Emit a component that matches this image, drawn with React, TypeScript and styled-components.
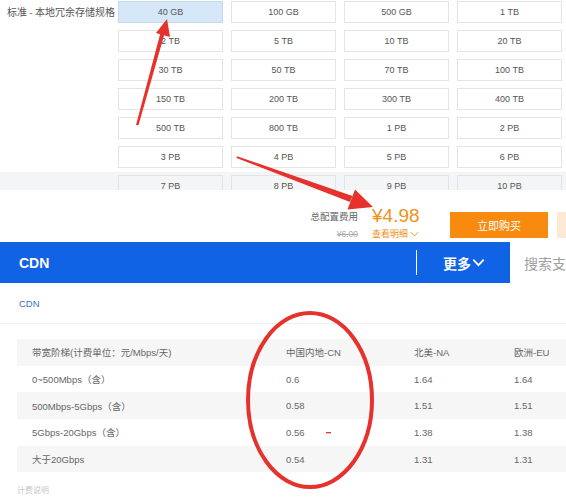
import React from "react";
import styled, { createGlobalStyle } from "styled-components";

const Global = createGlobalStyle`
  html, body { margin: 0; padding: 0; background: #fff; }
  body { overflow: hidden; font-family: "Liberation Sans", Arial, "Noto Sans CJK SC", sans-serif; }
  * { box-sizing: border-box; }
`;

const Page = styled.div`
  position: relative;
  width: 566px;
  height: 500px;
  overflow: hidden;
  background: #fff;
`;

const SpecSection = styled.section`
  display: flex;
  height: 190px;
  overflow: hidden;
  background: linear-gradient(to bottom, #fff 0, #fff 172px, #eef1f5 172px, #f3f5f8 173px);
`;

const SpecLabel = styled.div`
  width: 118px;
  flex-shrink: 0;
  padding-left: 7px;
  padding-top: 1px;
  line-height: 22px;
  font-size: 10px;
  color: #555;
  font-family: "Noto Sans CJK SC", sans-serif;
`;

const SpecGrid = styled.div`
  display: grid;
  grid-template-columns: repeat(4, 105px);
  grid-auto-rows: 22px;
  column-gap: 8px;
  row-gap: 7px;
  padding-top: 1px;
`;

const SpecCell = styled.div<{ $selected?: boolean; $muted?: boolean }>`
  display: flex;
  align-items: center;
  justify-content: center;
  font-size: 9px;
  color: #555;
  border: 1px solid ${(p) => (p.$selected ? "#c2d9ee" : "#e4e4e4")};
  background: ${(p) => (p.$selected ? "#d6e8f7" : p.$muted ? "#f4f5f7" : "#fff")};
`;

const PriceBar = styled.div`
  display: flex;
  align-items: flex-end;
  height: 52px;
  padding-left: 290px;
  padding-bottom: 4px;
  overflow: hidden;
`;

const PriceGroup = styled.div`
  display: grid;
  grid-template-columns: 68px 78px;
  column-gap: 14px;
  align-items: center;
  margin-bottom: -3px;
`;

const PriceLabel = styled.span`
  text-align: right;
  font-size: 9.5px;
  color: #666;
  font-family: "Noto Sans CJK SC", sans-serif;
`;

const PriceValue = styled.span`
  font-size: 19px;
  color: #f39118;
  line-height: 22px;
`;

const OldPrice = styled.span`
  text-align: right;
  font-size: 8.5px;
  color: #aaa;
  text-decoration: line-through;
  line-height: 14px;
`;

const DetailLink = styled.span`
  display: flex;
  align-items: center;
  gap: 2px;
  font-size: 9px;
  color: #f39118;
  line-height: 14px;
  font-family: "Noto Sans CJK SC", sans-serif;
`;

const BuyButton = styled.button<{ $variant?: "primary" | "ghost" }>`
  flex-shrink: 0;
  width: 98px;
  height: 26px;
  margin-left: ${(p) => (p.$variant === "ghost" ? "9px" : "0")};
  border: none;
  padding: 0;
  background: ${(p) => (p.$variant === "ghost" ? "#fde9d6" : "#f78a0f")};
  color: #fff;
  font-size: 11px;
  font-family: "Noto Sans CJK SC", sans-serif;
`;

const NavRow = styled.nav`
  display: flex;
  height: 41px;
`;

const NavBlue = styled.div`
  display: flex;
  align-items: center;
  flex-shrink: 0;
  width: 510px;
  padding-left: 19px;
  padding-right: 25px;
  background: #1163e6;
  color: #fff;
`;

const NavTitle = styled.span`
  font-size: 14px;
  font-weight: bold;
`;

const NavDivider = styled.span`
  width: 1.5px;
  height: 25px;
  margin-left: auto;
  margin-right: 26px;
  background: #fff;
`;

const NavMore = styled.span`
  display: flex;
  align-items: center;
  gap: 1px;
  font-size: 14px;
  font-weight: bold;
  font-family: "Noto Sans CJK SC", sans-serif;
`;

const SearchBox = styled.div`
  display: flex;
  align-items: center;
  flex-shrink: 0;
  padding-left: 14px;
  font-size: 14px;
  color: #a0a0a0;
  white-space: nowrap;
  font-family: "Noto Sans CJK SC", sans-serif;
`;

const Breadcrumb = styled.div`
  height: 41px;
  display: flex;
  align-items: center;
  padding-left: 19px;
  border-bottom: 1px solid #eeeeee;
  font-size: 9.5px;
  color: #3d74ba;
`;

const PriceTable = styled.div`
  margin: 15px 0 0 17px;
  display: grid;
  grid-template-columns: 269px 128px 100px 1fr;
  grid-auto-rows: 26.7px;
`;

const TableCell = styled.div<{ $shade?: boolean; $first?: boolean }>`
  display: flex;
  align-items: center;
  padding-left: ${(p) => (p.$first ? "15px" : "0")};
  background: ${(p) => (p.$shade ? "#f6f6f6" : "#fff")};
  font-size: 9.5px;
  color: #666;
  font-family: "Liberation Sans", Arial, "Noto Sans CJK SC", sans-serif;
`;

const FootNote = styled.div`
  margin: 12px 0 0 17px;
  font-size: 8px;
  color: #c8c8c8;
  font-family: "Noto Sans CJK SC", sans-serif;
`;

const Annotations = styled.svg`
  position: absolute;
  left: 0;
  top: 0;
  pointer-events: none;
`;

const Chevron = ({ size, color, stroke }: { size: number; color: string; stroke: number }) => (
  <svg width={size} height={size * 0.7} viewBox="0 0 10 7">
    <path d="M1 1.2 L5 5.5 L9 1.2" fill="none" stroke={color} strokeWidth={stroke} />
  </svg>
);

const sizes = [
  "40 GB", "100 GB", "500 GB", "1 TB",
  "2 TB", "5 TB", "10 TB", "20 TB",
  "30 TB", "50 TB", "70 TB", "100 TB",
  "150 TB", "200 TB", "300 TB", "400 TB",
  "500 TB", "800 TB", "1 PB", "2 PB",
  "3 PB", "4 PB", "5 PB", "6 PB",
  "7 PB", "8 PB", "9 PB", "10 PB",
];

const tableRows = [
  ["带宽阶梯(计费单位：元/Mbps/天)", "中国内地-CN", "北美-NA", "欧洲-EU"],
  ["0~500Mbps（含）", "0.6", "1.64", "1.64"],
  ["500Mbps-5Gbps（含）", "0.58", "1.51", "1.51"],
  ["5Gbps-20Gbps（含）", "0.56", "1.38", "1.38"],
  ["大于20Gbps", "0.54", "1.31", "1.31"],
];

export default function App() {
  return (
    <Page>
      <Global />
      <SpecSection>
        <SpecLabel>标准 - 本地冗余存储规格</SpecLabel>
        <SpecGrid>
          {sizes.map((s, i) => (
            <SpecCell key={s} $selected={i === 0} $muted={i >= 24}>
              {s}
            </SpecCell>
          ))}
        </SpecGrid>
      </SpecSection>

      <PriceBar>
        <PriceGroup>
          <PriceLabel>总配置费用</PriceLabel>
          <PriceValue>¥4.98</PriceValue>
          <OldPrice>¥6.00</OldPrice>
          <DetailLink>
            查看明细
            <Chevron size={9} color="#f39118" stroke={1} />
          </DetailLink>
        </PriceGroup>
        <BuyButton>立即购买</BuyButton>
        <BuyButton $variant="ghost" />
      </PriceBar>

      <NavRow>
        <NavBlue>
          <NavTitle>CDN</NavTitle>
          <NavDivider />
          <NavMore>
            更多
            <Chevron size={13} color="#fff" stroke={1.4} />
          </NavMore>
        </NavBlue>
        <SearchBox>搜索支持</SearchBox>
      </NavRow>

      <Breadcrumb>CDN</Breadcrumb>

      <PriceTable>
        {tableRows.map((row, r) =>
          row.map((c, ci) => (
            <TableCell key={`${r}-${ci}`} $shade={r % 2 === 0} $first={ci === 0}>
              {c}
            </TableCell>
          ))
        )}
      </PriceTable>

      <FootNote>计费说明</FootNote>

      <Annotations width={566} height={500} viewBox="0 0 566 500">
        <polygon points="136,125 138.5,125.3 164.5,33.8 160.5,32.8" fill="#e5322d" />
        <polygon points="167,19 170,37 156,33" fill="#e5322d" />
        <polygon points="237,156.2 236.5,158 350,202 352.5,196" fill="#e5322d" />
        <polygon points="373,207 347.5,209.5 355,189.5" fill="#e5322d" />
        <ellipse cx={310} cy={400} rx={62} ry={87} fill="none" stroke="#e5322d" strokeWidth={4} />
        <rect x={326} y={432} width={5} height={1.3} fill="#e5322d" />
      </Annotations>
    </Page>
  );
}
